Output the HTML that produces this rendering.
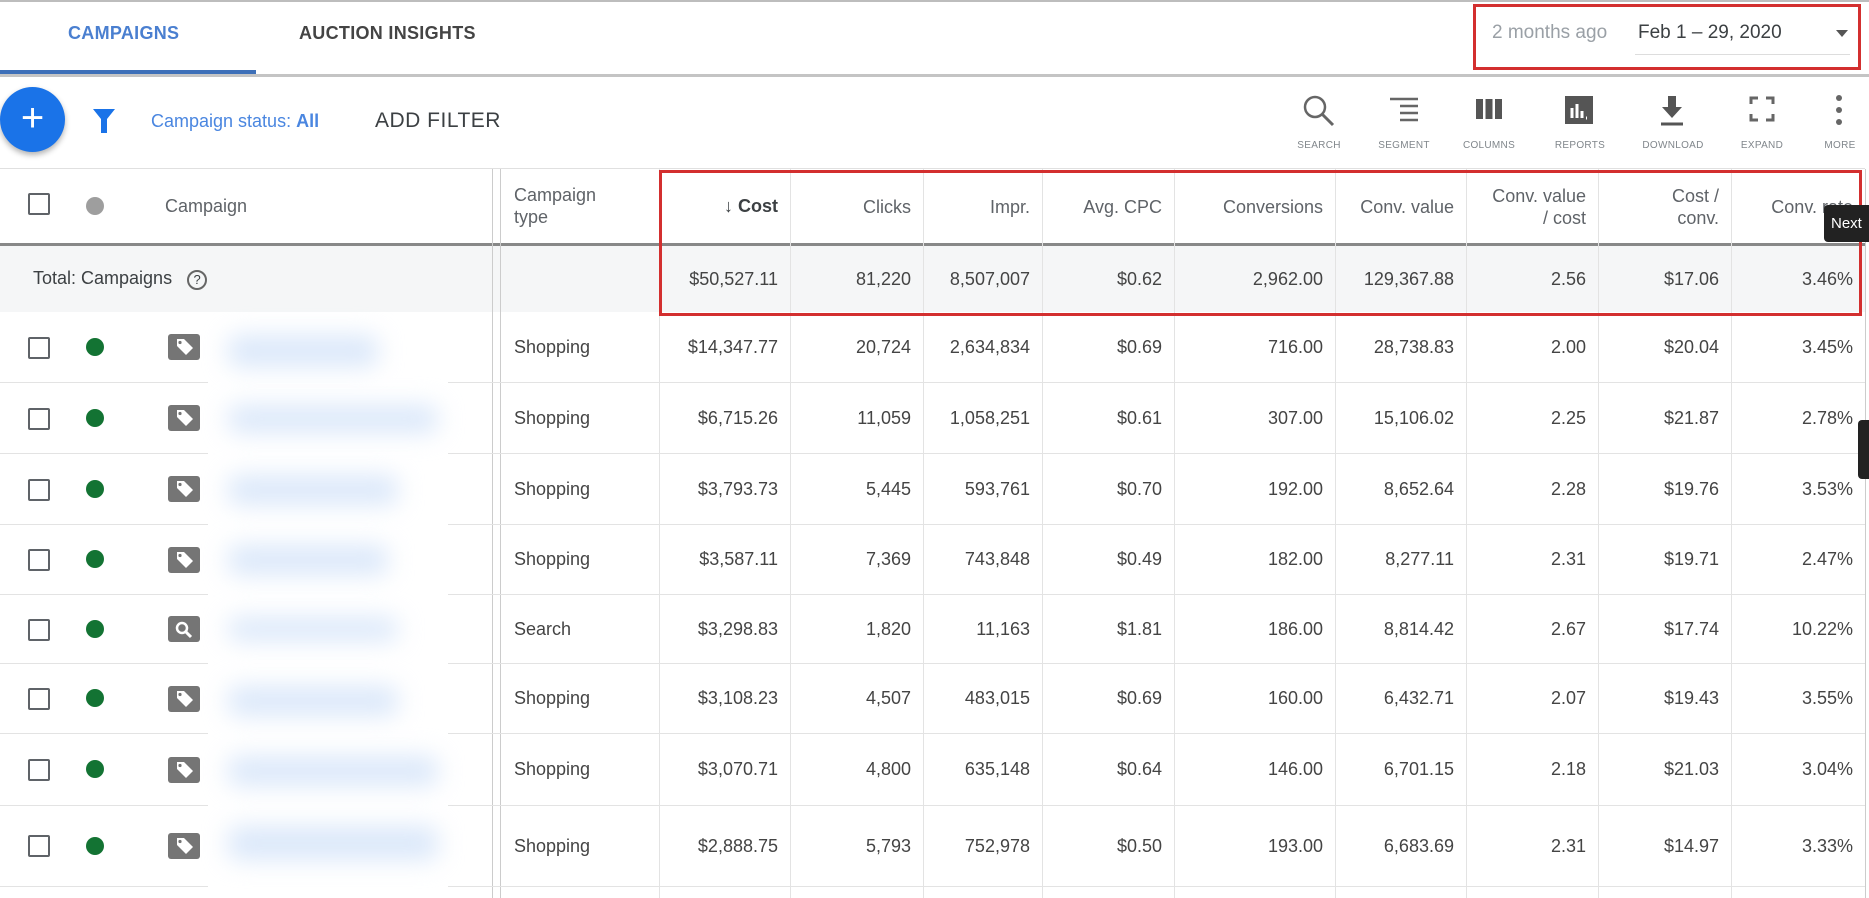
<!DOCTYPE html>
<html><head><meta charset="utf-8"><style>
*{margin:0;padding:0;box-sizing:border-box}
body{width:1869px;height:898px;overflow:hidden;background:#fff;font-family:"Liberation Sans",Arial,sans-serif;color:#3c4043;position:relative}
.a{position:absolute}
.r{position:absolute;left:0;width:1865px;border-bottom:1px solid #e3e3e3}
.c{position:absolute;top:0;height:100%;display:flex;align-items:center;justify-content:flex-end;padding-right:12px;font-size:18px;color:#444}
.t{left:500px;width:159px;justify-content:flex-start;padding-left:14px}
.k1{left:659px;width:131px}.k2{left:790px;width:133px}.k3{left:923px;width:119px}.k4{left:1042px;width:132px}.k5{left:1174px;width:161px}.k6{left:1335px;width:131px}.k7{left:1466px;width:132px}.k8{left:1598px;width:133px}.k9{left:1731px;width:134px}
.vl{position:absolute;top:169px;bottom:0;width:1px;background:#e3e3e3}
.cb{position:absolute;left:28px;width:22px;height:22px;border:2px solid #5f6368;border-radius:2px}
.dot{position:absolute;left:86px;width:18px;height:18px;border-radius:50%;background:#137333}
.ic{position:absolute;left:168px;width:32px;height:26px}
.h{color:#5f6368;font-size:18px;line-height:22px;text-align:right}
.tl{position:absolute;font-size:10px;color:#80868b;letter-spacing:.3px;top:140px;transform:translateX(-50%);white-space:nowrap}
.ti{position:absolute;top:94px;transform:translateX(-50%)}
.blur{position:absolute;background:#dbe8fa;filter:blur(12px);border-radius:10px}
</style></head><body>
<svg width="0" height="0" style="position:absolute"><defs>
<symbol id="tag" viewBox="0 0 32 26"><rect width="32" height="26" rx="3" fill="#757575"/><path d="M9 5h7l9 9-7 7-9-9z" fill="#fff"/><circle cx="12" cy="8.5" r="1.6" fill="#757575"/></symbol>
<symbol id="srch" viewBox="0 0 32 26"><rect width="32" height="26" rx="3" fill="#757575"/><circle cx="14" cy="12" r="5" fill="none" stroke="#fff" stroke-width="2.5"/><path d="M18 16l5 5" stroke="#fff" stroke-width="3"/></symbol>
</defs></svg>
<div class="a" style="left:0;top:0;width:1869px;height:2px;background:#bdbdbd"></div>
<div class="a" style="left:68px;top:23px;font-size:18px;color:#4a7fd0;font-weight:bold;letter-spacing:.3px">CAMPAIGNS</div>
<div class="a" style="left:299px;top:23px;font-size:18px;color:#444;font-weight:bold;letter-spacing:.3px">AUCTION INSIGHTS</div>
<div class="a" style="left:0;top:74px;width:1869px;height:3px;background:#c4c4c4"></div>
<div class="a" style="left:0;top:70px;width:256px;height:4px;background:#3d6fb8"></div>
<div class="a" style="left:1473px;top:4px;width:388px;height:66px;border:3px solid #d32f2f"></div>
<div class="a" style="left:1492px;top:22px;font-size:19px;color:#9aa0a6">2 months ago</div>
<div class="a" style="left:1638px;top:22px;font-size:19px;color:#3c4043">Feb 1 – 29, 2020</div>
<div class="a" style="left:1635px;top:54px;width:215px;height:1px;background:#ddd"></div>
<div class="a" style="left:1836px;top:30px;width:0;height:0;border-left:6px solid transparent;border-right:6px solid transparent;border-top:7px solid #555"></div>

<div class="a" style="left:0;top:87px;width:65px;height:65px;border-radius:50%;background:#1a73e8;box-shadow:0 3px 6px rgba(0,0,0,.3);color:#fff;font-size:40px;line-height:63px;text-align:center">+</div>
<svg class="a" style="left:92px;top:108px" width="24" height="26" viewBox="0 0 24 26"><path d="M1 1h22l-8 10v14h-6V11z" fill="#1a73e8"/></svg>
<div class="a" style="left:151px;top:111px;font-size:18px;color:#4a86e0">Campaign status: <b>All</b></div>
<div class="a" style="left:375px;top:109px;font-size:21px;color:#3c4043;letter-spacing:.5px">ADD FILTER</div>

<svg class="ti" style="left:1319px" width="34" height="34" viewBox="0 0 34 34"><circle cx="13" cy="13" r="10" fill="none" stroke="#666" stroke-width="2.5"/><path d="M20 20l11 11" stroke="#666" stroke-width="3"/></svg>
<svg class="ti" style="left:1404px" width="32" height="32" viewBox="0 0 32 32"><path d="M2 5h28M12 12h18M12 19h18M12 26h18" stroke="#666" stroke-width="2.5"/></svg>
<svg class="ti" style="left:1489px" width="30" height="30" viewBox="0 0 30 30"><path d="M2 5h7v20H2zM11.5 5h7v20h-7zM21 5h7v20h-7z" fill="#555"/></svg>
<svg class="ti" style="left:1579px" width="30" height="30" viewBox="0 0 30 30"><rect x="1" y="2" width="28" height="28" fill="#555"/><path d="M8 24V14M13 24V10M18 24V17M22 24h1" stroke="#fff" stroke-width="3"/></svg>
<svg class="ti" style="left:1672px" width="30" height="34" viewBox="0 0 30 34"><path d="M11 2h8v11h6L15 24 5 13h6z" fill="#555"/><path d="M4 30h22" stroke="#555" stroke-width="3"/></svg>
<svg class="ti" style="left:1762px" width="28" height="30" viewBox="0 0 28 30"><path d="M3 10V4h7M18 4h7v6M25 20v6h-7M10 26H3v-6" fill="none" stroke="#666" stroke-width="3"/></svg>
<svg class="ti" style="left:1839px" width="10" height="32" viewBox="0 0 10 32"><circle cx="5" cy="4" r="3" fill="#666"/><circle cx="5" cy="16" r="3" fill="#666"/><circle cx="5" cy="28" r="3" fill="#666"/></svg>
<div class="tl" style="left:1319px">SEARCH</div><div class="tl" style="left:1404px">SEGMENT</div><div class="tl" style="left:1489px">COLUMNS</div><div class="tl" style="left:1580px">REPORTS</div><div class="tl" style="left:1673px">DOWNLOAD</div><div class="tl" style="left:1762px">EXPAND</div><div class="tl" style="left:1840px">MORE</div>

<div class="a" style="left:0;top:168px;width:1865px;height:1px;background:#e0e0e0"></div>
<div class="a" style="left:0;top:244px;width:1865px;height:68px;background:#f5f6f7"></div>
<div class="a" style="left:0;top:243px;width:1865px;height:3px;background:#888"></div>
<div class="vl" style="left:492px;background:#ccc"></div><div class="vl" style="left:500px;background:#ccc"></div>
<div class="vl" style="left:659px"></div><div class="vl" style="left:790px"></div><div class="vl" style="left:923px"></div><div class="vl" style="left:1042px"></div><div class="vl" style="left:1174px"></div><div class="vl" style="left:1335px"></div><div class="vl" style="left:1466px"></div><div class="vl" style="left:1598px"></div><div class="vl" style="left:1731px"></div><div class="vl" style="left:1865px;background:#ccc"></div>

<div class="r" style="top:169px;height:75px;border:none">
<div class="cb" style="top:24px"></div><div class="dot" style="top:28px;background:#9e9e9e"></div>
<div class="a h" style="left:165px;top:26px;text-align:left">Campaign</div>
<div class="a h" style="left:514px;top:15px;text-align:left">Campaign<br>type</div>
<div class="c k1" style="font-weight:bold;color:#3c4043">↓ Cost</div>
<div class="c k2 h">Clicks</div><div class="c k3 h">Impr.</div><div class="c k4 h">Avg. CPC</div><div class="c k5 h">Conversions</div><div class="c k6 h">Conv. value</div>
<div class="c k7 h">Conv. value<br>/ cost</div><div class="c k8 h">Cost /<br>conv.</div><div class="c k9 h">Conv. rate</div>
</div>
<div class="r" style="top:246px;height:66px;border:none">
<div class="a" style="left:33px;top:22px;font-size:18px">Total: Campaigns <span style="display:inline-block;width:20px;height:20px;border:2px solid #666;border-radius:50%;font-size:13px;text-align:center;line-height:16px;margin-left:10px">?</span></div>
<div class="c k1">$50,527.11</div><div class="c k2">81,220</div><div class="c k3">8,507,007</div><div class="c k4">$0.62</div><div class="c k5">2,962.00</div><div class="c k6">129,367.88</div><div class="c k7">2.56</div><div class="c k8">$17.06</div><div class="c k9">3.46%</div>
</div>
<div class="a" style="left:659px;top:170px;width:1203px;height:146px;border:3px solid #d32f2f"></div>
<div class="a" style="left:1824px;top:205px;width:45px;height:37px;background:#222;border-radius:4px 0 0 4px;color:#fff;font-size:15px;line-height:37px;padding-left:7px">Next</div>

<div class="r" style="top:312px;height:71px"><div class="cb" style="top:25px"></div><div class="dot" style="top:26px"></div><svg class="ic" style="top:22px"><use href="#tag"/></svg><div class="c t">Shopping</div><div class="c k1">$14,347.77</div><div class="c k2">20,724</div><div class="c k3">2,634,834</div><div class="c k4">$0.69</div><div class="c k5">716.00</div><div class="c k6">28,738.83</div><div class="c k7">2.00</div><div class="c k8">$20.04</div><div class="c k9">3.45%</div></div>
<div class="r" style="top:383px;height:71px"><div class="cb" style="top:25px"></div><div class="dot" style="top:26px"></div><svg class="ic" style="top:22px"><use href="#tag"/></svg><div class="c t">Shopping</div><div class="c k1">$6,715.26</div><div class="c k2">11,059</div><div class="c k3">1,058,251</div><div class="c k4">$0.61</div><div class="c k5">307.00</div><div class="c k6">15,106.02</div><div class="c k7">2.25</div><div class="c k8">$21.87</div><div class="c k9">2.78%</div></div>
<div class="r" style="top:454px;height:71px"><div class="cb" style="top:25px"></div><div class="dot" style="top:26px"></div><svg class="ic" style="top:22px"><use href="#tag"/></svg><div class="c t">Shopping</div><div class="c k1">$3,793.73</div><div class="c k2">5,445</div><div class="c k3">593,761</div><div class="c k4">$0.70</div><div class="c k5">192.00</div><div class="c k6">8,652.64</div><div class="c k7">2.28</div><div class="c k8">$19.76</div><div class="c k9">3.53%</div></div>
<div class="r" style="top:525px;height:70px"><div class="cb" style="top:24px"></div><div class="dot" style="top:25px"></div><svg class="ic" style="top:22px"><use href="#tag"/></svg><div class="c t">Shopping</div><div class="c k1">$3,587.11</div><div class="c k2">7,369</div><div class="c k3">743,848</div><div class="c k4">$0.49</div><div class="c k5">182.00</div><div class="c k6">8,277.11</div><div class="c k7">2.31</div><div class="c k8">$19.71</div><div class="c k9">2.47%</div></div>
<div class="r" style="top:595px;height:69px"><div class="cb" style="top:24px"></div><div class="dot" style="top:25px"></div><svg class="ic" style="top:21px"><use href="#srch"/></svg><div class="c t">Search</div><div class="c k1">$3,298.83</div><div class="c k2">1,820</div><div class="c k3">11,163</div><div class="c k4">$1.81</div><div class="c k5">186.00</div><div class="c k6">8,814.42</div><div class="c k7">2.67</div><div class="c k8">$17.74</div><div class="c k9">10.22%</div></div>
<div class="r" style="top:664px;height:70px"><div class="cb" style="top:24px"></div><div class="dot" style="top:25px"></div><svg class="ic" style="top:22px"><use href="#tag"/></svg><div class="c t">Shopping</div><div class="c k1">$3,108.23</div><div class="c k2">4,507</div><div class="c k3">483,015</div><div class="c k4">$0.69</div><div class="c k5">160.00</div><div class="c k6">6,432.71</div><div class="c k7">2.07</div><div class="c k8">$19.43</div><div class="c k9">3.55%</div></div>
<div class="r" style="top:734px;height:72px"><div class="cb" style="top:25px"></div><div class="dot" style="top:26px"></div><svg class="ic" style="top:23px"><use href="#tag"/></svg><div class="c t">Shopping</div><div class="c k1">$3,070.71</div><div class="c k2">4,800</div><div class="c k3">635,148</div><div class="c k4">$0.64</div><div class="c k5">146.00</div><div class="c k6">6,701.15</div><div class="c k7">2.18</div><div class="c k8">$21.03</div><div class="c k9">3.04%</div></div>
<div class="r" style="top:806px;height:81px"><div class="cb" style="top:29px"></div><div class="dot" style="top:31px"></div><svg class="ic" style="top:27px"><use href="#tag"/></svg><div class="c t">Shopping</div><div class="c k1">$2,888.75</div><div class="c k2">5,793</div><div class="c k3">752,978</div><div class="c k4">$0.50</div><div class="c k5">193.00</div><div class="c k6">6,683.69</div><div class="c k7">2.31</div><div class="c k8">$14.97</div><div class="c k9">3.33%</div></div>

<div class="a" style="left:208px;top:313px;width:240px;height:585px;background:#fff"></div>
<div class="blur" style="left:228px;top:335px;width:150px;height:32px"></div>
<div class="blur" style="left:228px;top:405px;width:210px;height:28px"></div>
<div class="blur" style="left:228px;top:475px;width:170px;height:30px"></div>
<div class="blur" style="left:228px;top:545px;width:160px;height:30px"></div>
<div class="blur" style="left:228px;top:617px;width:170px;height:24px"></div>
<div class="blur" style="left:228px;top:686px;width:170px;height:30px"></div>
<div class="blur" style="left:228px;top:756px;width:210px;height:30px"></div>
<div class="blur" style="left:228px;top:826px;width:210px;height:34px"></div>
<div class="a" style="left:1858px;top:420px;width:11px;height:59px;background:#222;border-radius:4px 0 0 4px"></div>
</body></html>
